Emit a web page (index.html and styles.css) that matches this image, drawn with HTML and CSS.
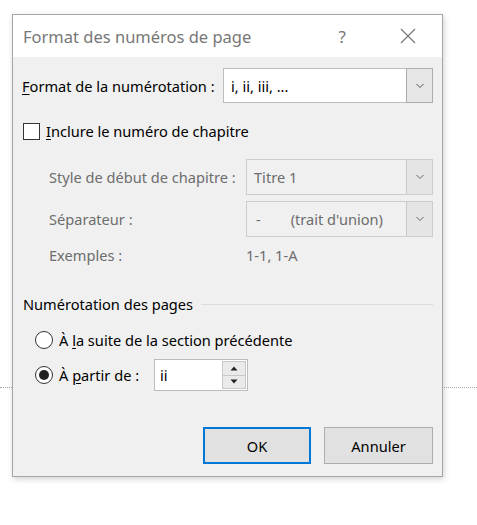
FILE: index.html
```html
<!DOCTYPE html>
<html lang="fr">
<head>
<meta charset="utf-8">
<title>Format des numéros de page</title>
<link rel="stylesheet" href="styles.css">
</head>
<body>
<div class="page">
  <div class="dotline left"></div>
  <div class="dotline right"></div>
  <div class="dialog">
    <div class="titlebar">
      <span class="title">Format des numéros de page</span>
      <span class="help">?</span>
      <svg class="close" width="16" height="16" viewBox="0 0 16 16"><path d="M1 1 L15 15 M15 1 L1 15" stroke="#777" stroke-width="1.2" fill="none"/></svg>
    </div>
    <div class="body">
      <div class="row row-format">
        <span class="label"><u>F</u>ormat de la numérotation :</span>
        <div class="combo enabled wide">
          <span class="combo-text">i, ii, iii, ...</span>
          <span class="drop"><svg width="10" height="6" viewBox="0 0 10 6"><path d="M1.5 1 L5 4.5 L8.5 1" stroke="#555" stroke-width="1" fill="none"/></svg></span>
        </div>
      </div>
      <div class="row row-check">
        <span class="checkbox"></span>
        <span class="label"><u>I</u>nclure le numéro de chapitre</span>
      </div>
      <div class="row row-sub first">
        <span class="label dis">Style de début de chapitre :</span>
        <div class="combo disabled">
          <span class="combo-text">Titre 1</span>
          <span class="drop"><svg width="10" height="6" viewBox="0 0 10 6"><path d="M1.5 1 L5 4.5 L8.5 1" stroke="#666" stroke-width="1" fill="none"/></svg></span>
        </div>
      </div>
      <div class="row row-sub second">
        <span class="label dis">Séparateur :</span>
        <div class="combo disabled">
          <span class="combo-text"><span class="dash">-</span>(trait d'union)</span>
          <span class="drop"><svg width="10" height="6" viewBox="0 0 10 6"><path d="M1.5 1 L5 4.5 L8.5 1" stroke="#666" stroke-width="1" fill="none"/></svg></span>
        </div>
      </div>
      <div class="row row-ex">
        <span class="label dis">Exemples :</span>
        <span class="value dis">1-1, 1-A</span>
      </div>
      <div class="row row-group">
        <span class="label">Numérotation des pages</span>
        <span class="group-line"></span>
      </div>
      <div class="row row-radio first">
        <span class="radio"></span>
        <span class="label">À <u>l</u>a suite de la section précédente</span>
      </div>
      <div class="row row-radio second">
        <span class="radio checked"></span>
        <span class="label radio-label">À <u>p</u>artir de :</span>
        <div class="spin">
          <span class="spin-text">ii</span>
          <span class="spin-btns">
            <span class="spin-btn"><svg width="8" height="5" viewBox="0 0 8 5"><path d="M0.5 4.5 L4 0.5 L7.5 4.5 Z" fill="#222"/></svg></span>
            <span class="spin-btn"><svg width="8" height="5" viewBox="0 0 8 5"><path d="M0.5 0.5 L4 4.5 L7.5 0.5 Z" fill="#222"/></svg></span>
          </span>
        </div>
      </div>
      <div class="row row-buttons">
        <button class="btn default">OK</button>
        <button class="btn">Annuler</button>
      </div>
    </div>
  </div>
</div>
</body>
</html>
```
FILE: styles.css
```css
html, body {
  margin: 0;
  padding: 0;
  background: #ffffff;
}
body {
  width: 477px;
  height: 525px;
  overflow: hidden;
  font-family: "Noto Sans", "Open Sans", sans-serif;
  font-size: 14.6px;
  color: #000;
}
.page {
  position: relative;
  width: 477px;
  height: 525px;
  padding-top: 14px;
  padding-left: 12px;
  box-sizing: border-box;
}
.dotline {
  position: absolute;
  top: 387px;
  height: 0;
  border-top: 1px dotted #a8a8a8;
}
.dotline.left { left: 0; width: 12px; }
.dotline.right { left: 444px; width: 33px; }
.dialog {
  position: relative;
  width: 431px;
  height: 463px;
  box-sizing: border-box;
  border: 1px solid #a6a6a6;
  background: #f0f0f0;
  box-shadow: 1px 2px 6px rgba(0,0,0,0.18);
  display: flex;
  flex-direction: column;
}
.titlebar {
  height: 42px;
  background: #fff;
  display: flex;
  align-items: center;
  padding-left: 10px;
}
.title {
  font-size: 16.5px;
  color: #777;
  flex: 1;
}
.help {
  font-size: 17px;
  color: #777;
  margin-right: 54px;
}
.close {
  margin-right: 26px;
}
.body {
  flex: 1;
  padding: 0 9px 0 9px;
  display: flex;
  flex-direction: column;
}
.row {
  display: flex;
  align-items: center;
}
u {
  text-decoration: underline;
  text-underline-offset: 2px;
}
.dis { color: #6d6d6d; }
.row-format {
  margin-top: 11px;
  height: 35px;
}
.row-format .label { width: 201px; }
.combo {
  box-sizing: border-box;
  border: 1px solid #bcbcbc;
  display: flex;
  align-items: stretch;
  height: 35px;
}
.combo.enabled { background: #fff; width: 210px; }
.combo.disabled { background: #f0f0f0; width: 187px; border-color: #cccccc; height: 36px; }
.combo-text {
  flex: 1;
  display: flex;
  align-items: center;
  padding-left: 7px;
}
.combo.disabled .combo-text { color: #6d6d6d; }
.dash { margin-right: 30px; margin-left: 2px; }
.drop {
  width: 25px;
  background: #e5e5e5;
  border-left: 1px solid #c8c8c8;
  display: flex;
  align-items: center;
  justify-content: center;
}
.combo.enabled .drop { background: #e6e6e6; border: 1px solid #adadad; margin: -1px -1px -1px 0; }
.row-check {
  margin-top: 19px;
  height: 18px;
}
.checkbox {
  width: 17px;
  height: 17px;
  box-sizing: border-box;
  border: 1px solid #333;
  background: #fff;
  margin-left: 1px;
  margin-right: 6px;
}
.row-sub { height: 36px; }
.row-sub.first { margin-top: 19px; }
.row-sub.second { margin-top: 6px; }
.row-sub .label { margin-left: 27px; width: 197px; }
.row-ex {
  margin-top: 7px;
  height: 22px;
}
.row-ex .label { margin-left: 27px; width: 197px; }
.row-group {
  margin-top: 28px;
  height: 20px;
}
.row-group .label { margin-left: 1px; margin-right: 8px; }
.group-line {
  flex: 1;
  height: 1px;
  background: #dcdcdc;
  margin-top: 1px;
}
.radio {
  width: 18px;
  height: 18px;
  box-sizing: border-box;
  border: 1px solid #333;
  border-radius: 50%;
  background: #fff;
  margin-left: 13px;
  margin-right: 6px;
  display: flex;
  align-items: center;
  justify-content: center;
}
.radio.checked::after {
  content: "";
  width: 10px;
  height: 10px;
  border-radius: 50%;
  background: #222;
}
.row-radio { height: 20px; }
.row-radio.first { margin-top: 16px; }
.row-radio.second { margin-top: 15px; }
.radio-label { width: 95px; }
.spin {
  width: 94px;
  height: 32px;
  box-sizing: border-box;
  border: 1px solid #bcbcbc;
  background: #fff;
  display: flex;
}
.spin-text {
  flex: 1;
  display: flex;
  align-items: center;
  padding-left: 5px;
}
.spin-btns {
  width: 24px;
  display: flex;
  flex-direction: column;
  margin: 1px 1px 1px 0;
}
.spin-btn {
  flex: 1;
  background: #eaeaea;
  border: 1px solid #c8c8c8;
  display: flex;
  align-items: center;
  justify-content: center;
}
.spin-btn + .spin-btn { border-top: none; }
.row-buttons {
  margin-top: 42px;
  height: 37px;
  justify-content: flex-end;
  gap: 13px;
}
.btn {
  font-family: "Noto Sans", "Open Sans", sans-serif;
  font-size: 14.6px;
  color: #000;
  background: #e1e1e1;
  border: 1px solid #adadad;
  height: 37px;
  width: 109px;
  padding: 0;
  box-sizing: border-box;
}
.btn.default {
  border: 2px solid #0078d7;
  width: 108px;
}
```
